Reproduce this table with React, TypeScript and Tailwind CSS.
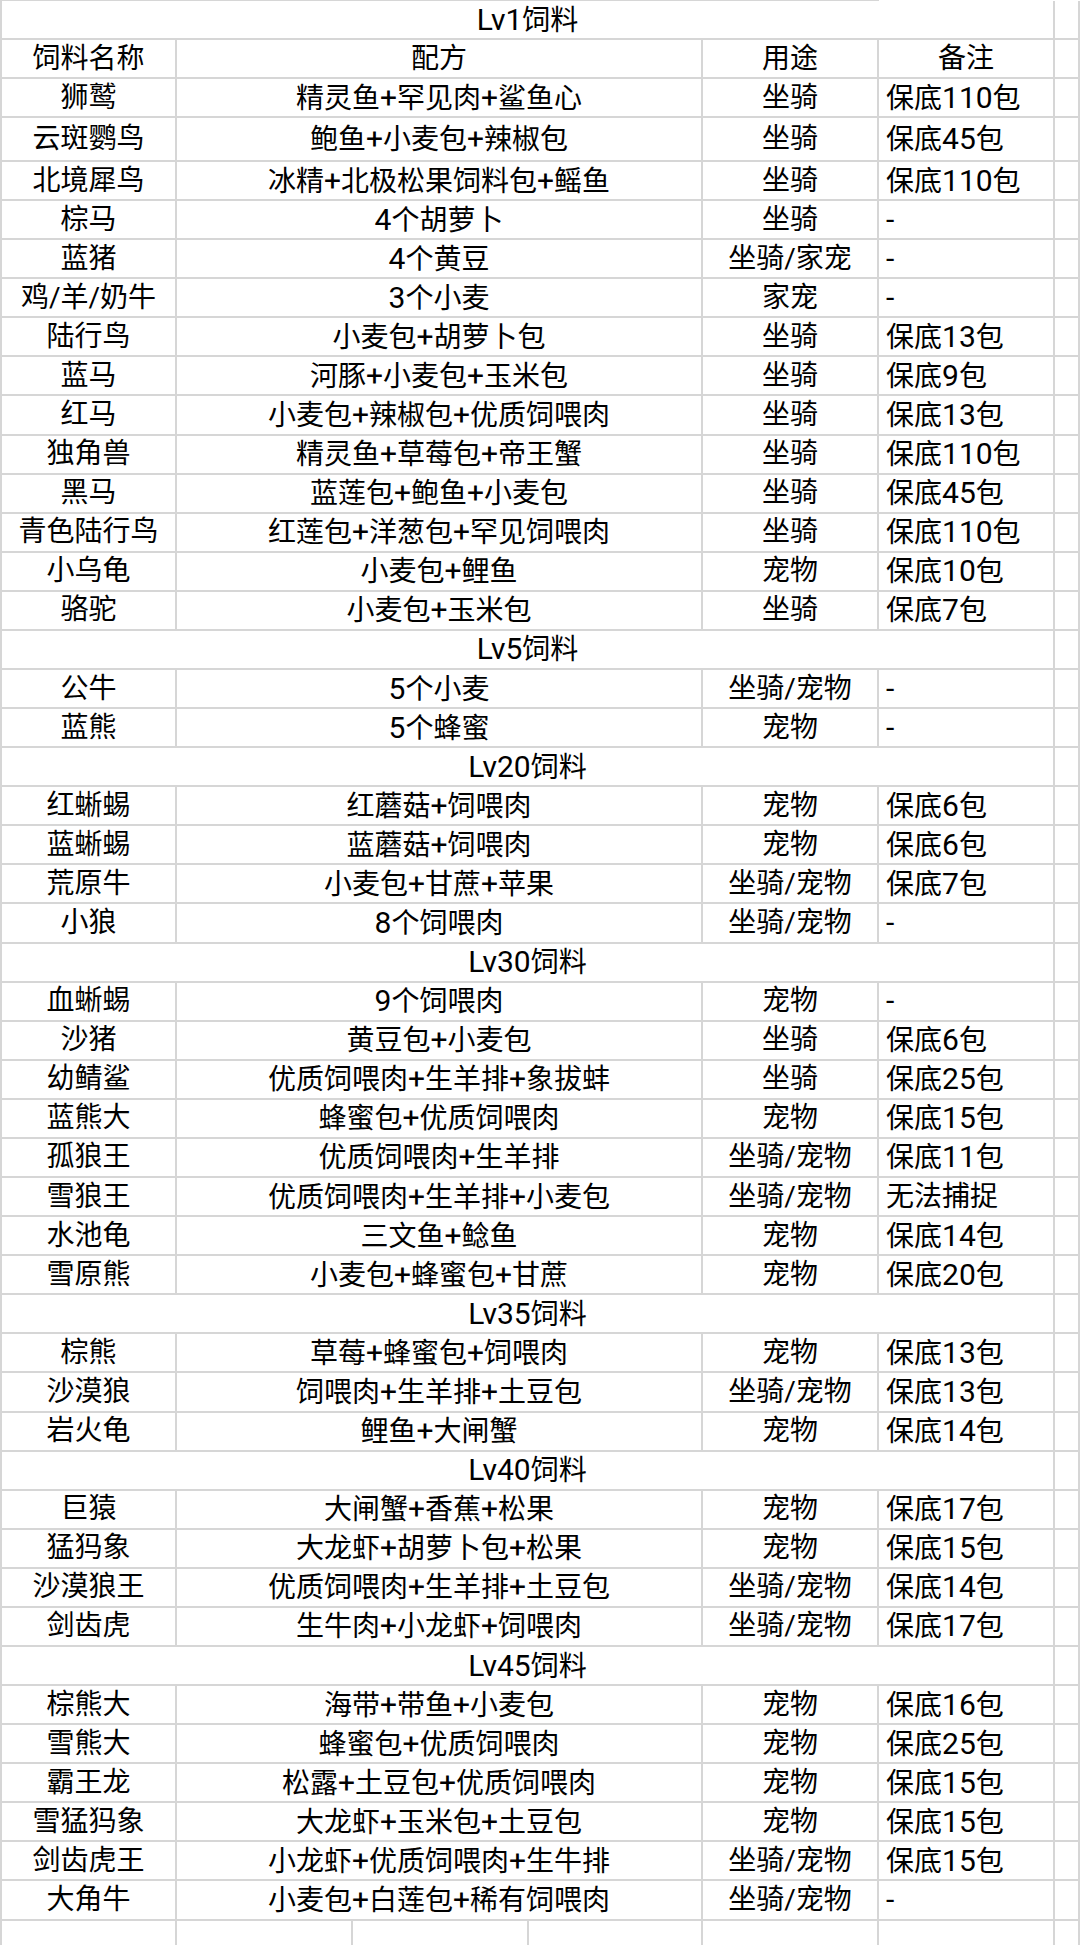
import type { ReactNode } from 'react';

type Row = [string, string, string, string];

interface Section {
  title: string;
  rows: Row[];
}

const sections: Section[] = [
  {
    title: 'Lv1饲料',
    rows: [
      ['饲料名称', '配方', '用途', '备注'],
      ['狮鹫', '精灵鱼+罕见肉+鲨鱼心', '坐骑', '保底110包'],
      ['云斑鹦鸟', '鲍鱼+小麦包+辣椒包', '坐骑', '保底45包'],
      ['北境犀鸟', '冰精+北极松果饲料包+鳐鱼', '坐骑', '保底110包'],
      ['棕马', '4个胡萝卜', '坐骑', '-'],
      ['蓝猪', '4个黄豆', '坐骑/家宠', '-'],
      ['鸡/羊/奶牛', '3个小麦', '家宠', '-'],
      ['陆行鸟', '小麦包+胡萝卜包', '坐骑', '保底13包'],
      ['蓝马', '河豚+小麦包+玉米包', '坐骑', '保底9包'],
      ['红马', '小麦包+辣椒包+优质饲喂肉', '坐骑', '保底13包'],
      ['独角兽', '精灵鱼+草莓包+帝王蟹', '坐骑', '保底110包'],
      ['黑马', '蓝莲包+鲍鱼+小麦包', '坐骑', '保底45包'],
      ['青色陆行鸟', '红莲包+洋葱包+罕见饲喂肉', '坐骑', '保底110包'],
      ['小乌龟', '小麦包+鲤鱼', '宠物', '保底10包'],
      ['骆驼', '小麦包+玉米包', '坐骑', '保底7包'],
    ],
  },
  {
    title: 'Lv5饲料',
    rows: [
      ['公牛', '5个小麦', '坐骑/宠物', '-'],
      ['蓝熊', '5个蜂蜜', '宠物', '-'],
    ],
  },
  {
    title: 'Lv20饲料',
    rows: [
      ['红蜥蜴', '红蘑菇+饲喂肉', '宠物', '保底6包'],
      ['蓝蜥蜴', '蓝蘑菇+饲喂肉', '宠物', '保底6包'],
      ['荒原牛', '小麦包+甘蔗+苹果', '坐骑/宠物', '保底7包'],
      ['小狼', '8个饲喂肉', '坐骑/宠物', '-'],
    ],
  },
  {
    title: 'Lv30饲料',
    rows: [
      ['血蜥蜴', '9个饲喂肉', '宠物', '-'],
      ['沙猪', '黄豆包+小麦包', '坐骑', '保底6包'],
      ['幼鲭鲨', '优质饲喂肉+生羊排+象拔蚌', '坐骑', '保底25包'],
      ['蓝熊大', '蜂蜜包+优质饲喂肉', '宠物', '保底15包'],
      ['孤狼王', '优质饲喂肉+生羊排', '坐骑/宠物', '保底11包'],
      ['雪狼王', '优质饲喂肉+生羊排+小麦包', '坐骑/宠物', '无法捕捉'],
      ['水池龟', '三文鱼+鲶鱼', '宠物', '保底14包'],
      ['雪原熊', '小麦包+蜂蜜包+甘蔗', '宠物', '保底20包'],
    ],
  },
  {
    title: 'Lv35饲料',
    rows: [
      ['棕熊', '草莓+蜂蜜包+饲喂肉', '宠物', '保底13包'],
      ['沙漠狼', '饲喂肉+生羊排+土豆包', '坐骑/宠物', '保底13包'],
      ['岩火龟', '鲤鱼+大闸蟹', '宠物', '保底14包'],
    ],
  },
  {
    title: 'Lv40饲料',
    rows: [
      ['巨猿', '大闸蟹+香蕉+松果', '宠物', '保底17包'],
      ['猛犸象', '大龙虾+胡萝卜包+松果', '宠物', '保底15包'],
      ['沙漠狼王', '优质饲喂肉+生羊排+土豆包', '坐骑/宠物', '保底14包'],
      ['剑齿虎', '生牛肉+小龙虾+饲喂肉', '坐骑/宠物', '保底17包'],
    ],
  },
  {
    title: 'Lv45饲料',
    rows: [
      ['棕熊大', '海带+带鱼+小麦包', '宠物', '保底16包'],
      ['雪熊大', '蜂蜜包+优质饲喂肉', '宠物', '保底25包'],
      ['霸王龙', '松露+土豆包+优质饲喂肉', '宠物', '保底15包'],
      ['雪猛犸象', '大龙虾+玉米包+土豆包', '宠物', '保底15包'],
      ['剑齿虎王', '小龙虾+优质饲喂肉+生牛排', '坐骑/宠物', '保底15包'],
      ['大角牛', '小麦包+白莲包+稀有饲喂肉', '坐骑/宠物', '-'],
    ],
  },
];

// the sheet's row heights are not all equal: the first rows are 39px, the 4th is taller
const rowHeight = (index: number) => {
  if (index === 3) return 'h-[44px]';
  if (index < 3) return 'h-[39px]';
  return 'h-[39.09px]';
};

const cell = 'flex items-center border-r-2 border-b-2 border-[#d6d6d6] overflow-hidden whitespace-nowrap';

// latin runs (digits, "+", "Lv") sit a little larger than the CJK glyphs in the sheet
function Txt({ value }: { value: string }) {
  const parts: ReactNode[] = [];
  value.split(/([A-Za-z0-9+\-]+)/).forEach((part, i) => {
    if (!part) return;
    if (/^[A-Za-z0-9+\-]+$/.test(part)) {
      parts.push(
        <span key={i} className="text-[30px]">
          {part}
        </span>
      );
    } else {
      parts.push(part);
    }
  });
  return <span>{parts}</span>;
}

function TitleRow({ title, index }: { title: string; index: number }) {
  return (
    <div className={`grid grid-cols-[1055px_1fr] ${rowHeight(index)}`}>
      <div className={`${cell} justify-center border-l-2`}>
        <Txt value={title} />
      </div>
      <div className={`${cell} border-r-0`} />
    </div>
  );
}

function DataRow({ row, index, header }: { row: Row; index: number; header?: boolean }) {
  const [name, recipe, usage, note] = row;
  return (
    <div className={`grid grid-cols-[177px_526px_176px_176px_1fr] ${rowHeight(index)}`}>
      <div className={`${cell} justify-center border-l-2`}>{name}</div>
      <div className={`${cell} justify-center`}>
        <Txt value={recipe} />
      </div>
      <div className={`${cell} justify-center`}>{usage}</div>
      <div className={header ? `${cell} justify-center` : `${cell} pl-[7px]`}>
        <Txt value={note} />
      </div>
      <div className={`${cell} border-r-0`} />
    </div>
  );
}

export default function App() {
  let index = 0;
  const lines: JSX.Element[] = [];
  sections.forEach((section) => {
    lines.push(<TitleRow key={`t${index}`} title={section.title} index={index} />);
    index++;
    section.rows.forEach((row) => {
      lines.push(<DataRow key={`r${index}`} row={row} index={index} header={index === 1} />);
      index++;
    });
  });

  return (
    <div
      className="w-[1080px] h-[1945px] overflow-hidden bg-white text-black text-[28px] leading-none"
      style={{ fontFamily: 'Roboto, "Noto Sans CJK SC", sans-serif' }}
    >
      <div className="h-px w-[879px] bg-[#d6d6d6]" />
      {lines}
      {/* empty sheet row under the table, plain default-width columns */}
      <div className="grid grid-cols-[177px_176px_176px_174px_176px_176px_1fr] h-[39px]">
        <div className={`${cell} border-l-2`} />
        <div className={cell} />
        <div className={cell} />
        <div className={cell} />
        <div className={cell} />
        <div className={cell} />
        <div className={`${cell} border-r-0`} />
      </div>
    </div>
  );
}
